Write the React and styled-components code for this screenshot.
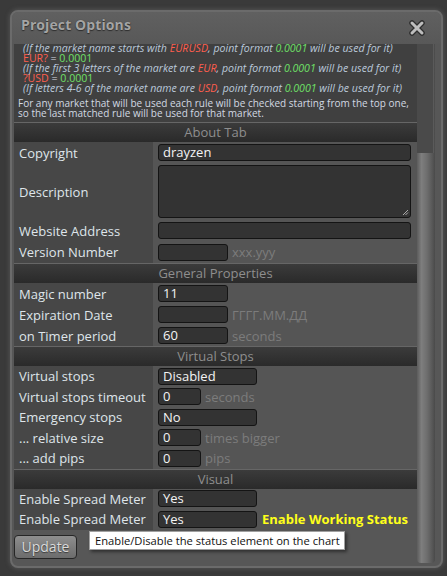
import React from "react";
import styled, { createGlobalStyle } from "styled-components";

const Global = createGlobalStyle`
  html, body { margin: 0; padding: 0; background: #3a3a3a; }
  body { font-family: "Open Sans", "Noto Sans", Arial, sans-serif; }
  * { box-sizing: border-box; }
`;

const Page = styled.div`
  padding: 10px 0 0 10px;
  width: 447px;
  height: 576px;
`;

const Window = styled.div`
  width: 433px;
  height: 558px;
  border: 2px solid #6b6b6b;
  border-radius: 8px;
  background: #575757;
  box-shadow: 0 0 4px 1px rgba(110, 110, 110, 0.45);
  padding: 0 6px 3px 2px;
  display: flex;
  flex-direction: column;
  overflow: hidden;
`;

const TitleBar = styled.div`
  height: 32px;
  flex-shrink: 0;
  display: flex;
  align-items: flex-start;
  justify-content: space-between;
  background: linear-gradient(#606060, #585858);
  margin: 0 -6px 0 -2px;
  padding: 3px 16px 0 9px;
`;

const Title = styled.div`
  font-weight: 700;
  font-size: 14px;
  line-height: 19px;
  color: #a4a4a4;
  text-shadow: 0 1px 1px #2e2e2e, 0 0 1px #3a3a3a;
  letter-spacing: 0.1px;
`;

const CloseBox = styled.div`
  margin-top: 4px;
  width: 16px;
  height: 16px;
`;

const Body = styled.div`
  flex: 1;
  display: flex;
  min-height: 0;
`;

const Panel = styled.div`
  width: 403px;
  overflow: hidden;
  display: flex;
  flex-direction: column;
`;

const ScrollTrack = styled.div`
  width: 18px;
  border-radius: 0 0 4px 4px;
  background: linear-gradient(90deg, #5c5c5c 0%, #7e7e7e 25%, #6e6e6e 55%, #575757 85%, #4a4a4a 100%);
  display: flex;
  flex-direction: column;
`;

const Thumb = styled.div`
  height: 109px;
  width: 17px;
  background: #4a4a4a;
  border-right: 1px solid #5a5a5a;
`;

const Notes = styled.div`
  background: #404040;
  padding: 0 0 4px 0;
  flex-shrink: 0;
`;

const NoteLines = styled.div`
  margin-top: -1px;
  font-size: 10.6px;
  line-height: 10px;
`;

const NoteLine = styled.div`
  padding-left: 9px;
  white-space: nowrap;
  font-style: ${(p) => (p.$italic ? "italic" : "normal")};
  color: ${(p) => (p.$italic ? "#bac8da" : "#d8dde4")};
`;

const NoteText = styled.div`
  padding-left: 4px;
  margin-top: 5px;
  font-size: 10px;
  line-height: 10px;
  color: #d2d9e2;
  white-space: nowrap;
`;

const Red = styled.span`
  color: #ff5e4e;
`;
const Green = styled.span`
  color: #6fe067;
`;

const Header = styled.div`
  height: 20px;
  flex-shrink: 0;
  border-top: 1px solid #666;
  background: linear-gradient(#3b3b3b, #2a2a2a);
  color: #8e8e8e;
  font-size: 13px;
  line-height: 19px;
  text-align: center;
`;

const Row = styled.div`
  display: grid;
  flex-shrink: 0;
  grid-template-columns: 139px 1fr;
  height: ${(p) => p.$h || 21}px;
`;

const Label = styled.div`
  background: #474747;
  color: #dfe5ea;
  font-size: 13px;
  padding-left: 5px;
  display: flex;
  align-items: center;
  white-space: nowrap;
`;

const Value = styled.div`
  background: #555555;
  display: flex;
  align-items: center;
  padding-left: 5px;
  gap: 4px;
`;

const Input = styled.div`
  width: ${(p) => p.$w}px;
  height: ${(p) => p.$hgt || 17}px;
  background: #333333;
  border: 1px solid #141414;
  border-radius: 3px;
  color: #f4f4f4;
  font-size: 13px;
  line-height: 15px;
  padding-left: 4px;
  position: relative;
  flex-shrink: 0;
`;

const Grip = styled.svg`
  position: absolute;
  right: 1px;
  bottom: 1px;
`;

const Hint = styled.span`
  color: #7c7c7c;
  font-size: 13px;
  white-space: nowrap;
`;

const Status = styled.span`
  color: #ffff1a;
  font-weight: 700;
  font-size: 13px;
  white-space: nowrap;
  margin-left: 1px;
`;

const Footer = styled.div`
  position: relative;
  padding-top: 5px;
  flex-shrink: 0;
`;

const UpdateButton = styled.button`
  width: 63px;
  height: 24px;
  border: 1px solid #262626;
  border-radius: 4px;
  background: linear-gradient(#8e8e8e, #6c6c6c);
  color: #dadada;
  font-family: "Open Sans", "Noto Sans", sans-serif;
  font-size: 14px;
  text-shadow: 0 1px 1px #3a3a3a;
  padding: 0;
  line-height: 20px;
`;

const Tooltip = styled.div`
  position: absolute;
  left: 75px;
  top: 1px;
  width: 256px;
  height: 19px;
  background: #ffffff;
  border: 1px solid #a0a0a0;
  box-shadow: 2px 2px 3px rgba(0, 0, 0, 0.45);
  color: #111;
  font-size: 11.2px;
  line-height: 17px;
  padding-left: 5px;
  white-space: nowrap;
`;

const CloseIcon = () => (
  <CloseBox>
    <svg width="16" height="16" viewBox="0 0 16 16">
      <g strokeLinecap="round">
        <path d="M3 3 L13 13 M13 3 L3 13" stroke="#2e2e2e" strokeWidth="5.5" />
        <path d="M3 3 L13 13 M13 3 L3 13" stroke="#bdbdbd" strokeWidth="3" />
      </g>
    </svg>
  </CloseBox>
);

const Section = ({ title, children }) => (
  <>
    <Header>{title}</Header>
    {children}
  </>
);

export default function App() {
  return (
    <>
      <Global />
      <Page>
        <Window>
          <TitleBar>
            <Title>Project Options</Title>
            <CloseIcon />
          </TitleBar>
          <Body>
            <Panel>
              <Notes>
                <NoteLines>
                  <NoteLine $italic>
                    (If the market name starts with <Red>EURUSD</Red>, point format <Green>0.0001</Green> will be used for it)
                  </NoteLine>
                  <NoteLine>
                    <Red>EUR?</Red> = <Green>0.0001</Green>
                  </NoteLine>
                  <NoteLine $italic>
                    (If the first 3 letters of the market are <Red>EUR</Red>, point format <Green>0.0001</Green> will be used for it)
                  </NoteLine>
                  <NoteLine>
                    <Red>?USD</Red> = <Green>0.0001</Green>
                  </NoteLine>
                  <NoteLine $italic>
                    (If letters 4-6 of the market name are <Red>USD</Red>, point format <Green>0.0001</Green> will be used for it)
                  </NoteLine>
                </NoteLines>
                <NoteText>
                  For any market that will be used each rule will be checked starting from the top one,
                  <br />
                  so the last matched rule will be used for that market.
                </NoteText>
              </Notes>

              <Section title="About Tab">
                <Row>
                  <Label>Copyright</Label>
                  <Value>
                    <Input $w={253}>drayzen</Input>
                  </Value>
                </Row>
                <Row $h={57}>
                  <Label>Description</Label>
                  <Value>
                    <Input $w={253} $hgt={53}>
                      <Grip width="7" height="7" viewBox="0 0 7 7">
                        <path d="M6 1 L1 6 M6 3.5 L3.5 6" stroke="#aaa" strokeWidth="1" />
                      </Grip>
                    </Input>
                  </Value>
                </Row>
                <Row>
                  <Label>Website Address</Label>
                  <Value>
                    <Input $w={253} />
                  </Value>
                </Row>
                <Row $h={22}>
                  <Label>Version Number</Label>
                  <Value>
                    <Input $w={70} />
                    <Hint>xxx.yyy</Hint>
                  </Value>
                </Row>
              </Section>

              <Section title="General Properties">
                <Row>
                  <Label>Magic number</Label>
                  <Value>
                    <Input $w={70}>11</Input>
                  </Value>
                </Row>
                <Row>
                  <Label>Expiration Date</Label>
                  <Value>
                    <Input $w={70} />
                    <Hint>ГГГГ.ММ.ДД</Hint>
                  </Value>
                </Row>
                <Row>
                  <Label>on Timer period</Label>
                  <Value>
                    <Input $w={70}>60</Input>
                    <Hint>seconds</Hint>
                  </Value>
                </Row>
              </Section>

              <Section title="Virtual Stops">
                <Row $h={20.5}>
                  <Label>Virtual stops</Label>
                  <Value>
                    <Input $w={99}>Disabled</Input>
                  </Value>
                </Row>
                <Row $h={20.5}>
                  <Label>Virtual stops timeout</Label>
                  <Value>
                    <Input $w={43}>0</Input>
                    <Hint>seconds</Hint>
                  </Value>
                </Row>
                <Row $h={20.5}>
                  <Label>Emergency stops</Label>
                  <Value>
                    <Input $w={99}>No</Input>
                  </Value>
                </Row>
                <Row $h={20.5}>
                  <Label>... relative size</Label>
                  <Value>
                    <Input $w={43}>0</Input>
                    <Hint>times bigger</Hint>
                  </Value>
                </Row>
                <Row $h={20.5}>
                  <Label>... add pips</Label>
                  <Value>
                    <Input $w={43}>0</Input>
                    <Hint>pips</Hint>
                  </Value>
                </Row>
              </Section>

              <Section title="Visual">
                <Row $h={20}>
                  <Label>Enable Spread Meter</Label>
                  <Value>
                    <Input $w={99}>Yes</Input>
                  </Value>
                </Row>
                <Row $h={21}>
                  <Label>Enable Spread Meter</Label>
                  <Value>
                    <Input $w={99}>Yes</Input>
                    <Status>Enable Working Status</Status>
                  </Value>
                </Row>
              </Section>

              <Footer>
                <UpdateButton>Update</UpdateButton>
                <Tooltip>Enable/Disable the status element on the chart</Tooltip>
              </Footer>
            </Panel>
            <ScrollTrack>
              <Thumb />
            </ScrollTrack>
          </Body>
        </Window>
      </Page>
    </>
  );
}
